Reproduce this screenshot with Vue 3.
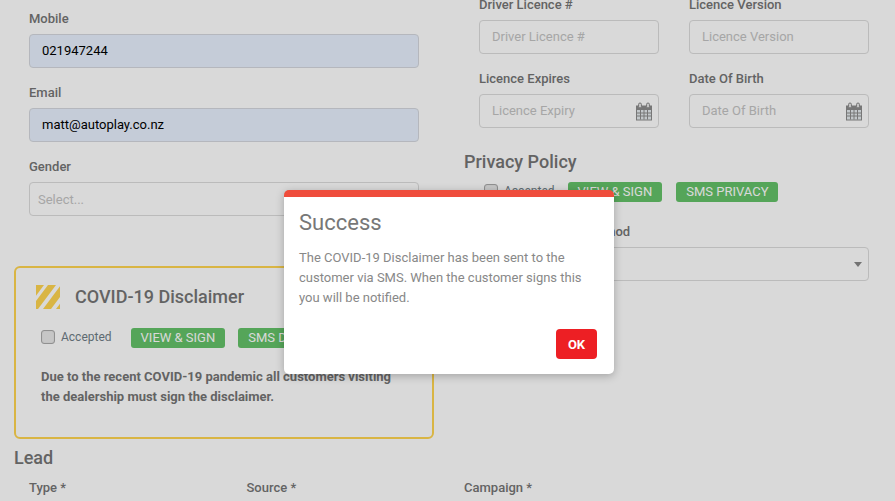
<script setup>
const leftFields = [
  { label: 'Mobile', value: '021947244' },
  { label: 'Email', value: 'matt@autoplay.co.nz' },
]
const leadFields = ['Type *', 'Source *', 'Campaign *']
</script>

<template>
  <div class="page">
    <div class="columns">
      <div class="col col-left">
        <div v-for="f in leftFields" :key="f.label" class="field">
          <label class="label">{{ f.label }}</label>
          <input class="input autofill" :value="f.value" readonly />
        </div>
        <div class="field">
          <label class="label">Gender</label>
          <div class="input select-box placeholder">Select...</div>
        </div>

        <section class="covid">
          <div class="covid-head">
            <svg class="stripes" width="24" height="24" viewBox="0 0 24 24">
              <polygon points="0,0 8,0 0,10.700" fill="#ffd551" />
              <polygon points="12,0 20,0 2,24 0,24 0,16" fill="#ffd551" />
              <polygon points="24,1.300 24,12 15,24 7,24" fill="#ffd551" />
              <polygon points="24,18.700 24,24 20,24" fill="#ffd551" />
            </svg>
            <h3 class="covid-title">COVID-19 Disclaimer</h3>
          </div>
          <div class="actions covid-actions">
            <span class="check"></span>
            <span class="accepted">Accepted</span>
            <button class="btn first">VIEW &amp; SIGN</button>
            <button class="btn">SMS DISCLAIMER</button>
          </div>
          <p class="covid-text">Due to the recent COVID-19 pandemic all customers visiting the dealership must sign the disclaimer.</p>
        </section>
      </div>

      <div class="col col-right">
        <div class="pair">
          <div class="field">
            <label class="label">Driver Licence #</label>
            <input class="input" placeholder="Driver Licence #" readonly />
          </div>
          <div class="field">
            <label class="label">Licence Version</label>
            <input class="input" placeholder="Licence Version" readonly />
          </div>
          <div class="field">
            <label class="label">Licence Expires</label>
            <div class="date">
              <input class="input" placeholder="Licence Expiry" readonly />
              <svg class="cal" width="18" height="19" viewBox="0 0 18 19">
                <path d="M1 3.500h16v15H1z" fill="#8c8c8c" />
                <path d="M2 8h14v9.500H2z" fill="#e6ecef" />
                <path d="M5.500 8v9.500M9 8v9.500M12.500 8v9.500M2 11h14M2 14h14" stroke="#8c8c8c" stroke-width="1" fill="none" />
                <rect x="3.500" y="1" width="3" height="5" rx="1.500" fill="#e6e6e6" stroke="#8c8c8c" />
                <rect x="11.500" y="1" width="3" height="5" rx="1.500" fill="#e6e6e6" stroke="#8c8c8c" />
              </svg>
            </div>
          </div>
          <div class="field">
            <label class="label">Date Of Birth</label>
            <div class="date">
              <input class="input" placeholder="Date Of Birth" readonly />
              <svg class="cal" width="18" height="19" viewBox="0 0 18 19">
                <path d="M1 3.500h16v15H1z" fill="#8c8c8c" />
                <path d="M2 8h14v9.500H2z" fill="#e6ecef" />
                <path d="M5.500 8v9.500M9 8v9.500M12.500 8v9.500M2 11h14M2 14h14" stroke="#8c8c8c" stroke-width="1" fill="none" />
                <rect x="3.500" y="1" width="3" height="5" rx="1.500" fill="#e6e6e6" stroke="#8c8c8c" />
                <rect x="11.500" y="1" width="3" height="5" rx="1.500" fill="#e6e6e6" stroke="#8c8c8c" />
              </svg>
            </div>
          </div>
        </div>

        <h3 class="heading privacy">Privacy Policy</h3>
        <div class="actions privacy-actions">
          <span class="check"></span>
          <span class="accepted">Accepted</span>
          <button class="btn first">VIEW &amp; SIGN</button>
          <button class="btn second">SMS PRIVACY</button>
        </div>
        <div class="field contact">
          <label class="label">Preferred Contact Method</label>
          <div class="input select-box"><span class="caret"></span></div>
        </div>
      </div>
    </div>

    <h3 class="heading lead">Lead</h3>
    <div class="lead-grid">
      <label v-for="f in leadFields" :key="f" class="label">{{ f }}</label>
    </div>

    <div class="mask">
      <div class="modal">
        <h2 class="modal-title">Success</h2>
        <p class="modal-text">The COVID-19 Disclaimer has been sent to the customer via SMS. When the customer signs this you will be notified.</p>
        <div class="modal-foot">
          <button class="ok">OK</button>
        </div>
      </div>
    </div>
  </div>
</template>

<style>
html, body { margin: 0; background: #d8d8d8; overflow: hidden; }
</style>

<style scoped>
* { box-sizing: border-box; }
.page {
  position: relative;
  width: 895px;
  height: 501px;
  overflow: hidden;
  background: #fff;
  font-family: Roboto, "Liberation Sans", sans-serif;
  color: #666;
}
.columns {
  display: grid;
  grid-template-columns: 420px 420px;
  column-gap: 30px;
  margin-left: 14px;
}
.col-left { padding-top: 10px; }
.col-left .field { margin: 0 15px; }
.col-right { margin-top: -4px; }
.field { height: 74px; }
.label {
  display: block;
  height: 18px;
  margin-bottom: 6px;
  font-size: 13px;
  line-height: 18px;
  font-weight: 500;
  color: #757575;
  white-space: nowrap;
}
.input {
  display: block;
  width: 100%;
  height: 34px;
  padding: 0 12px 2px;
  border: 1px solid #dcdcdc;
  border-radius: 4px;
  background: #fff;
  font: 13px/32px Roboto, sans-serif;
  color: #000;
  outline: none;
}
.input::placeholder, .placeholder { color: #c4c4c4; opacity: 1; }
.autofill { background: #e8f0fe; border-color: #d5d8de; }
.select-box { padding: 1px 8px 0; position: relative; }
.caret {
  position: absolute;
  right: 6px;
  top: 14px;
  border-left: 4px solid transparent;
  border-right: 4px solid transparent;
  border-top: 5px solid #888;
}
.covid {
  height: 173px;
  margin-top: 34px;
  padding: 14px 25px 0;
  border: 2px solid #ffd551;
  border-radius: 6px;
}
.covid-head {
  display: flex;
  align-items: center;
  gap: 15px;
  height: 30px;
  margin-left: -5px;
}
.covid-title, .heading {
  margin: 0;
  font-size: 18px;
  line-height: 20px;
  font-weight: 500;
  color: #757575;
}
.actions {
  display: flex;
  align-items: center;
  height: 20px;
}
.covid-actions { margin-top: 16px; }
.check {
  width: 14px;
  height: 14px;
  margin-bottom: 2px;
  border: 1px solid #aaa;
  border-radius: 3px;
  background: #e9e9e9;
  box-shadow: inset 0 0 1px #bbb;
}
.accepted {
  margin: 0 0 2px 6px;
  font-size: 12px;
  color: #6f7d86;
}
.btn {
  height: 20px;
  margin-left: 13px;
  padding: 0 10px;
  border: 0;
  border-radius: 3px;
  background: #64c269;
  font: 400 13px/20px Roboto, sans-serif;
  color: #fff;
  white-space: nowrap;
}
.btn.first { margin-left: 19px; }
.privacy-actions .btn.first { margin-left: 13px; }
.privacy-actions .btn.second { margin-left: 14px; }
.covid-text {
  margin: 19px 0 0;
  font-size: 13px;
  line-height: 20px;
  font-weight: 700;
  color: #757575;
}
.pair {
  display: grid;
  grid-template-columns: 180px 180px;
  column-gap: 30px;
  margin-left: 15px;
}
.date { position: relative; }
.cal { position: absolute; right: 6px; top: 8px; }
.privacy { margin-top: 8px; }
.privacy-actions { margin: 10px 0 0 20px; }
.contact { margin: 21px 15px 0; }
.lead { margin: 9px 0 0 14px; }
.lead-grid {
  display: grid;
  grid-template-columns: repeat(4, 217.500px);
  margin: 11px 0 0 29px;
}
.mask {
  position: absolute;
  inset: 0;
  background: rgba(0, 0, 0, 0.15);
}
.modal {
  position: absolute;
  left: 284px;
  top: 190px;
  width: 330px;
  height: 184px;
  padding: 15px 17px 0 15px;
  border-top: 7px solid #ef4d3c;
  border-radius: 5px;
  background: #fff;
  box-shadow: 0 2px 8px rgba(0, 0, 0, 0.25);
}
.modal-title {
  margin: 0;
  font-size: 22px;
  line-height: 22px;
  font-weight: 400;
  color: #777;
}
.modal-text {
  margin: 14px 0 0;
  font-size: 13px;
  line-height: 20px;
  color: #888;
}
.modal-foot {
  display: flex;
  justify-content: flex-end;
  margin-top: 21px;
}
.ok {
  width: 41px;
  height: 30px;
  border: 0;
  border-radius: 4px;
  background: #ed1f24;
  font: 700 13px/30px Roboto, sans-serif;
  color: #fff;
}
</style>
